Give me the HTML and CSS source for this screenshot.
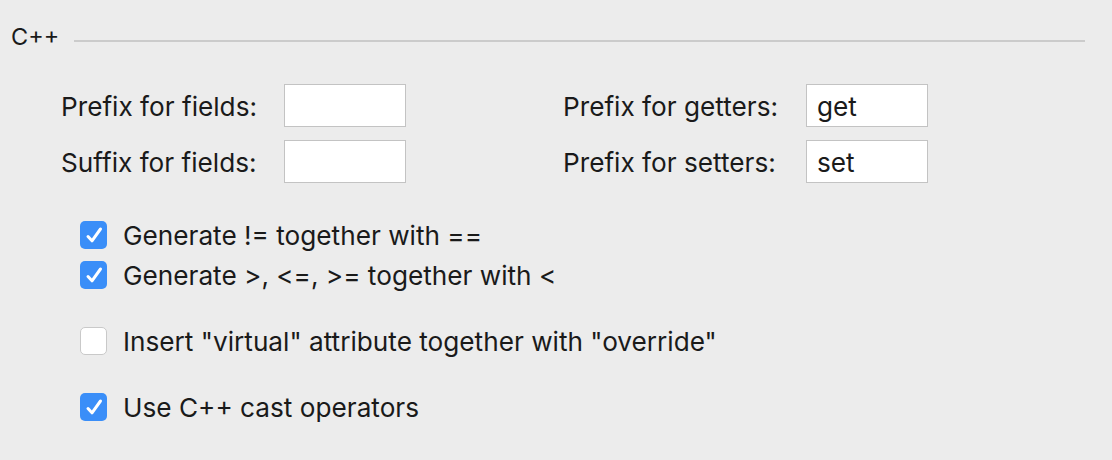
FILE: index.html
```html
<!DOCTYPE html>
<html>
<head>
<meta charset="utf-8">
<link rel="stylesheet" href="styles.css">
</head>
<body>
<div class="panel">
  <div class="title-row">
    <span class="title">C++</span>
    <span class="rule"></span>
  </div>
  <div class="fields">
    <label class="lbl">Prefix for fields:</label>
    <div class="input"></div>
    <span></span>
    <label class="lbl">Prefix for getters:</label>
    <div class="input">get</div>
    <label class="lbl">Suffix for fields:</label>
    <div class="input"></div>
    <span></span>
    <label class="lbl">Prefix for setters:</label>
    <div class="input">set</div>
  </div>
  <div class="checks">
    <div class="check-row">
      <span class="box on"><svg viewBox="0 0 27 28" width="27" height="28"><path d="M8 15.5 L12 19.8 L20.5 8" fill="none" stroke="#fff" stroke-width="3" stroke-linecap="round" stroke-linejoin="round"/></svg></span>
      <span class="ctext">Generate != together with ==</span>
    </div>
    <div class="check-row">
      <span class="box on"><svg viewBox="0 0 27 28" width="27" height="28"><path d="M8 15.5 L12 19.8 L20.5 8" fill="none" stroke="#fff" stroke-width="3" stroke-linecap="round" stroke-linejoin="round"/></svg></span>
      <span class="ctext">Generate &gt;, &lt;=, &gt;= together with &lt;</span>
    </div>
    <div class="check-row spaced">
      <span class="box"></span>
      <span class="ctext">Insert "virtual" attribute together with "override"</span>
    </div>
    <div class="check-row spaced">
      <span class="box on"><svg viewBox="0 0 27 28" width="27" height="28"><path d="M8 15.5 L12 19.8 L20.5 8" fill="none" stroke="#fff" stroke-width="3" stroke-linecap="round" stroke-linejoin="round"/></svg></span>
      <span class="ctext">Use C++ cast operators</span>
    </div>
  </div>
</div>
</body>
</html>
```
FILE: styles.css
```css
html, body {
  margin: 0;
  padding: 0;
  background: #ececec;
}
body {
  width: 1112px;
  height: 460px;
  overflow: hidden;
  font-family: Inter, "Liberation Sans", Arial, sans-serif;
  color: #1a1a1a;
}
.panel {
  display: flex;
  flex-direction: column;
}
.title-row {
  display: flex;
  align-items: center;
  height: 30px;
  margin-top: 22px;
  padding-left: 11px;
  padding-right: 27px;
  gap: 15px;
}
.title {
  font-size: 23.5px;
  line-height: 30px;
}
.rule {
  flex: 1;
  height: 2px;
  background: #cbcbcb;
  margin-top: 7px;
}
.fields {
  display: grid;
  grid-template-columns: 223px 122px 157px 243px 122px;
  grid-auto-rows: 43px;
  row-gap: 13px;
  padding-left: 61px;
  margin-top: 32px;
}
.lbl {
  font-size: 26.2px;
  display: flex;
  align-items: center;
  padding-top: 1px;
}
.input {
  box-sizing: border-box;
  background: #fff;
  border: 1px solid #c3c3c3;
  font-size: 26.2px;
  display: flex;
  align-items: center;
  padding-left: 10px;
  padding-top: 1px;
}
.checks {
  display: flex;
  flex-direction: column;
  padding-left: 80px;
  margin-top: 38px;
  gap: 12px;
}
.check-row {
  display: flex;
  align-items: center;
  gap: 16px;
  height: 28px;
}
.check-row.spaced {
  margin-top: 26px;
}
.box {
  box-sizing: border-box;
  width: 27px;
  height: 28px;
  border-radius: 5px;
  background: #fff;
  border: 1px solid #c9c9c9;
  display: flex;
  align-items: center;
  justify-content: center;
}
.box.on {
  background: #3a8ef8;
  border: none;
}
.box svg {
  display: block;
}
.ctext {
  font-size: 26.2px;
}
```
